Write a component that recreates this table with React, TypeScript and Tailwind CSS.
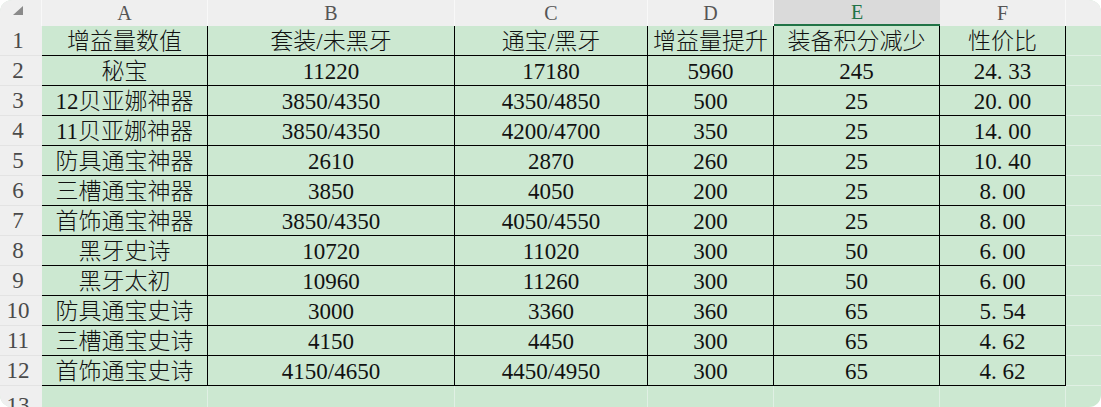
const letters = ["A", "B", "C", "D", "E", "F"];

const data: string[][] = [
  ["增益量数值", "套装/未黑牙", "通宝/黑牙", "增益量提升", "装备积分减少", "性价比"],
  ["秘宝", "11220", "17180", "5960", "245", "24.33"],
  ["12贝亚娜神器", "3850/4350", "4350/4850", "500", "25", "20.00"],
  ["11贝亚娜神器", "3850/4350", "4200/4700", "350", "25", "14.00"],
  ["防具通宝神器", "2610", "2870", "260", "25", "10.40"],
  ["三槽通宝神器", "3850", "4050", "200", "25", "8.00"],
  ["首饰通宝神器", "3850/4350", "4050/4550", "200", "25", "8.00"],
  ["黑牙史诗", "10720", "11020", "300", "50", "6.00"],
  ["黑牙太初", "10960", "11260", "300", "50", "6.00"],
  ["防具通宝史诗", "3000", "3360", "360", "65", "5.54"],
  ["三槽通宝史诗", "4150", "4450", "300", "65", "4.62"],
  ["首饰通宝史诗", "4150/4650", "4450/4950", "300", "65", "4.62"],
];

// SimSun gives the dot a half-em advance, so pad it out
const CellText = ({ text }: { text: string }) => {
  if (!/^\d+\.\d+$/.test(text)) return <>{text}</>;
  const [a, b] = text.split(".");
  return (
    <>
      {a}
      <span className="inline-block w-[0.5em] text-left">.</span>
      {b}
    </>
  );
};

export default function App() {
  return (
    <div className="w-[1101px] h-[407px] bg-white">
      <div
        className="w-[1101px] h-[407px] rounded-[12px] overflow-hidden bg-[#cce8d1] grid grid-cols-[42px_166px_247px_193px_126px_166px_126px_35px] grid-rows-[26px_repeat(13,30px)] text-black"
        style={{ fontFamily: '"Liberation Serif", "Noto Sans CJK SC", serif' }}
      >
        {/* column header row */}
        <div className="relative bg-[#efefef] border-r border-[#f8f8f8]">
          <svg className="absolute left-[12px] top-[5px]" width="12" height="11" viewBox="0 0 12 11">
            <polygon points="1,10 11,1 11,10" fill="#8a8a8a" />
          </svg>
        </div>
        {letters.map((l) =>
          l === "E" ? (
            <div
              key={l}
              className="bg-[#dadada] border-b-2 border-[#217346] flex items-center justify-center text-[20px] leading-none text-[#217346]"
            >
              {l}
            </div>
          ) : (
            <div
              key={l}
              className="bg-[#efefef] border-r border-[#f8f8f8] flex items-center justify-center text-[20px] leading-none text-[#555555]"
            >
              {l}
            </div>
          )
        )}
        <div className="bg-[#efefef]" />

        {/* body rows */}
        {data.map((row, ri) => (
          <div key={ri} className="contents">
            <div className="bg-[#efefef] border-b border-[#e3e3e3] flex items-center justify-center pr-[6px] text-[23px] leading-none text-[#4a4a4a]">
              {ri + 1}
            </div>
            {row.map((cell, ci) => (
              <div
                key={ci}
                className="border-r border-b border-black flex items-center justify-center pt-[2px] text-[23px] font-light leading-none whitespace-nowrap text-[#111]"
              >
                <CellText text={cell} />
              </div>
            ))}
            <div className="border-b border-[#e0f0e4]" />
          </div>
        ))}

        {/* row 13 */}
        <div className="bg-[#efefef] flex items-start justify-center pr-[6px] pt-[8px] text-[23px] leading-none text-[#4a4a4a]">
          13
        </div>
        {letters.map((l) => (
          <div key={l} className="border-r border-[#e0f0e4]" />
        ))}
        <div />
      </div>
    </div>
  );
}
